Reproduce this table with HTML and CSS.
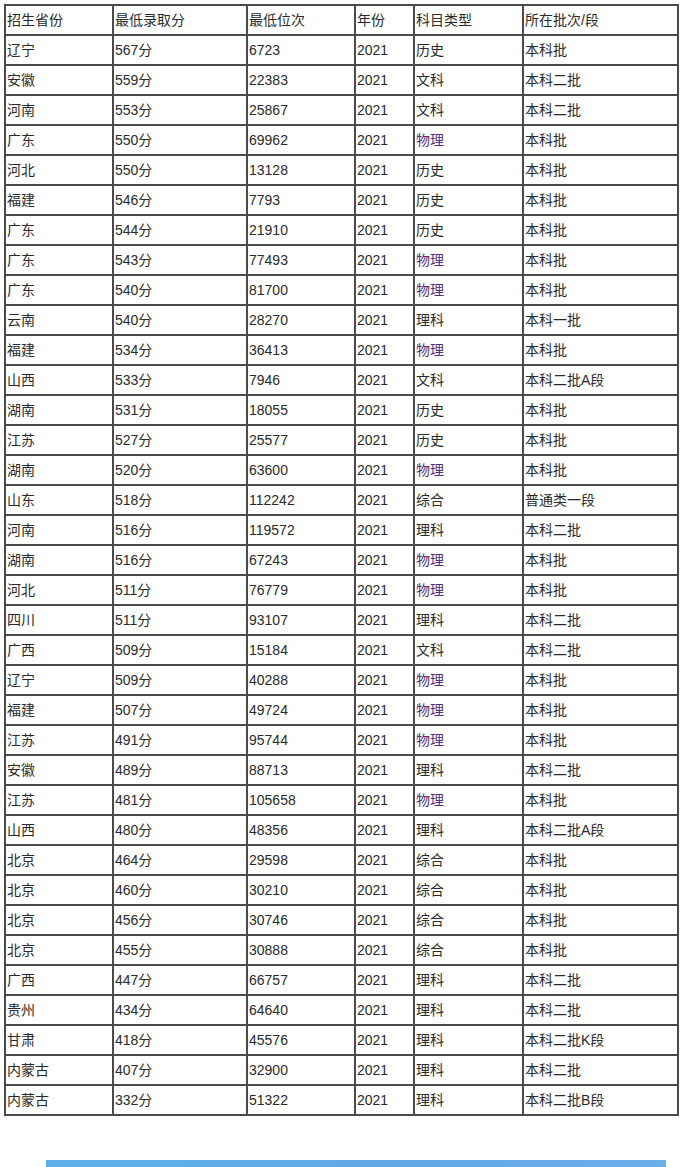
FILE: index.html
```html
<!DOCTYPE html>
<html lang="zh-CN">
<head>
<meta charset="utf-8">
<title>最低录取分</title>
<link rel="stylesheet" href="styles.css">
</head>
<body>
<div class="page">
<table class="scores">
<colgroup>
<col class="c1"><col class="c2"><col class="c3"><col class="c4"><col class="c5"><col class="c6">
</colgroup>
<tr><td>招生省份</td><td>最低录取分</td><td>最低位次</td><td>年份</td><td>科目类型</td><td>所在批次/段</td></tr>
<tr><td>辽宁</td><td>567分</td><td>6723</td><td>2021</td><td>历史</td><td>本科批</td></tr>
<tr><td>安徽</td><td>559分</td><td>22383</td><td>2021</td><td>文科</td><td>本科二批</td></tr>
<tr><td>河南</td><td>553分</td><td>25867</td><td>2021</td><td>文科</td><td>本科二批</td></tr>
<tr><td>广东</td><td>550分</td><td>69962</td><td>2021</td><td class="wl">物理</td><td>本科批</td></tr>
<tr><td>河北</td><td>550分</td><td>13128</td><td>2021</td><td>历史</td><td>本科批</td></tr>
<tr><td>福建</td><td>546分</td><td>7793</td><td>2021</td><td>历史</td><td>本科批</td></tr>
<tr><td>广东</td><td>544分</td><td>21910</td><td>2021</td><td>历史</td><td>本科批</td></tr>
<tr><td>广东</td><td>543分</td><td>77493</td><td>2021</td><td class="wl">物理</td><td>本科批</td></tr>
<tr><td>广东</td><td>540分</td><td>81700</td><td>2021</td><td class="wl">物理</td><td>本科批</td></tr>
<tr><td>云南</td><td>540分</td><td>28270</td><td>2021</td><td>理科</td><td>本科一批</td></tr>
<tr><td>福建</td><td>534分</td><td>36413</td><td>2021</td><td class="wl">物理</td><td>本科批</td></tr>
<tr><td>山西</td><td>533分</td><td>7946</td><td>2021</td><td>文科</td><td>本科二批A段</td></tr>
<tr><td>湖南</td><td>531分</td><td>18055</td><td>2021</td><td>历史</td><td>本科批</td></tr>
<tr><td>江苏</td><td>527分</td><td>25577</td><td>2021</td><td>历史</td><td>本科批</td></tr>
<tr><td>湖南</td><td>520分</td><td>63600</td><td>2021</td><td class="wl">物理</td><td>本科批</td></tr>
<tr><td>山东</td><td>518分</td><td>112242</td><td>2021</td><td>综合</td><td>普通类一段</td></tr>
<tr><td>河南</td><td>516分</td><td>119572</td><td>2021</td><td>理科</td><td>本科二批</td></tr>
<tr><td>湖南</td><td>516分</td><td>67243</td><td>2021</td><td class="wl">物理</td><td>本科批</td></tr>
<tr><td>河北</td><td>511分</td><td>76779</td><td>2021</td><td class="wl">物理</td><td>本科批</td></tr>
<tr><td>四川</td><td>511分</td><td>93107</td><td>2021</td><td>理科</td><td>本科二批</td></tr>
<tr><td>广西</td><td>509分</td><td>15184</td><td>2021</td><td>文科</td><td>本科二批</td></tr>
<tr><td>辽宁</td><td>509分</td><td>40288</td><td>2021</td><td class="wl">物理</td><td>本科批</td></tr>
<tr><td>福建</td><td>507分</td><td>49724</td><td>2021</td><td class="wl">物理</td><td>本科批</td></tr>
<tr><td>江苏</td><td>491分</td><td>95744</td><td>2021</td><td class="wl">物理</td><td>本科批</td></tr>
<tr><td>安徽</td><td>489分</td><td>88713</td><td>2021</td><td>理科</td><td>本科二批</td></tr>
<tr><td>江苏</td><td>481分</td><td>105658</td><td>2021</td><td class="wl">物理</td><td>本科批</td></tr>
<tr><td>山西</td><td>480分</td><td>48356</td><td>2021</td><td>理科</td><td>本科二批A段</td></tr>
<tr><td>北京</td><td>464分</td><td>29598</td><td>2021</td><td>综合</td><td>本科批</td></tr>
<tr><td>北京</td><td>460分</td><td>30210</td><td>2021</td><td>综合</td><td>本科批</td></tr>
<tr><td>北京</td><td>456分</td><td>30746</td><td>2021</td><td>综合</td><td>本科批</td></tr>
<tr><td>北京</td><td>455分</td><td>30888</td><td>2021</td><td>综合</td><td>本科批</td></tr>
<tr><td>广西</td><td>447分</td><td>66757</td><td>2021</td><td>理科</td><td>本科二批</td></tr>
<tr><td>贵州</td><td>434分</td><td>64640</td><td>2021</td><td>理科</td><td>本科二批</td></tr>
<tr><td>甘肃</td><td>418分</td><td>45576</td><td>2021</td><td>理科</td><td>本科二批K段</td></tr>
<tr><td>内蒙古</td><td>407分</td><td>32900</td><td>2021</td><td>理科</td><td>本科二批</td></tr>
<tr><td>内蒙古</td><td>332分</td><td>51322</td><td>2021</td><td>理科</td><td>本科二批B段</td></tr>
</table>
<div class="bar"></div>
</div>
</body>
</html>
```
FILE: styles.css
```css
html, body {
  margin: 0;
  padding: 0;
  background: #ffffff;
}
.page {
  padding: 4px 0 0 4px;
  font-family: "Liberation Sans", "Noto Sans CJK SC", sans-serif;
  font-size: 14px;
  color: #2a2a2a;
}
.scores {
  border-collapse: separate;
  border-spacing: 0;
  table-layout: fixed;
  width: 675px;
  border-top: 2px solid #4a4a4a;
  border-left: 2px solid #4a4a4a;
}
.c1 { width: 108px; }
.c2 { width: 134px; }
.c3 { width: 108px; }
.c4 { width: 59px; }
.c5 { width: 109px; }
.c6 { width: 155px; }
.scores td {
  box-sizing: border-box;
  height: 30px;
  padding: 0 0 0 1px;
  border-right: 2px solid #4a4a4a;
  border-bottom: 2px solid #4a4a4a;
  white-space: nowrap;
  overflow: hidden;
  vertical-align: middle;
  line-height: 28px;
}
.scores td.wl {
  color: #4e2f78;
}
.bar {
  margin: 44px 0 0 42px;
  width: 620px;
  height: 10px;
  background: linear-gradient(to right, #5cb0e8, #62a8e6 60%, #6aaeea);
}
```
